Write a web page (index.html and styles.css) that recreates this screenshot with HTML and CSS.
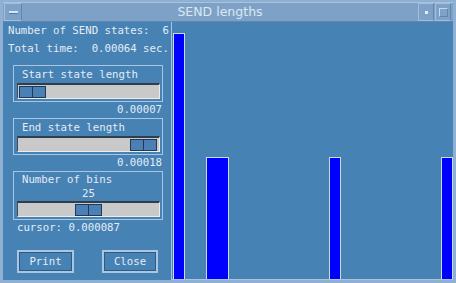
FILE: index.html
```html
<!DOCTYPE html>
<html lang="en">
<head>
  <meta charset="UTF-8" />
  <title>SEND lengths</title>
  <link rel="stylesheet" href="styles.css">
</head>
<body>
  <div class="window">
    <div class="titlebar">
      <div class="tb-btn menu-btn"><span class="dash"></span></div>
      <div class="title">SEND lengths</div>
      <div class="tb-btn min-btn"><span class="dot"></span></div>
      <div class="tb-btn max-btn"><span class="sq"></span></div>
    </div>
    <div class="content">
      <div class="panel">
        <div class="line">Number of SEND states:  6</div>
        <div class="line">Total time:  0.00064 sec.</div>

        <div class="group">
          <div class="label">Start state length</div>
          <div class="track start"><div class="thumb"></div></div>
        </div>
        <div class="value">0.00007</div>

        <div class="group">
          <div class="label">End state length</div>
          <div class="track end"><div class="thumb"></div></div>
        </div>
        <div class="value">0.00018</div>

        <div class="group bins">
          <div class="label">Number of bins</div>
          <div class="label center">25</div>
          <div class="track middle"><div class="thumb"></div></div>
        </div>
        <div class="cursor">cursor: 0.000087</div>

        <div class="buttons">
          <button class="btn">Print</button>
          <button class="btn">Close</button>
        </div>
      </div>
      <div class="canvas" id="canvas"></div>
    </div>
  </div>

  <script>
    // histogram bars: left offset, width, top (pixels inside the drawing area)
    const bars = [
      { left: 1, width: 12, top: 11 },
      { left: 34, width: 23, top: 135 },
      { left: 157, width: 12, top: 135 },
      { left: 269, width: 12, top: 135 }
    ];
    const canvas = document.getElementById("canvas");
    bars.forEach(b => {
      const bar = document.createElement("div");
      bar.className = "bar";
      bar.style.left = b.left + "px";
      bar.style.width = b.width + "px";
      bar.style.top = b.top + "px";
      canvas.appendChild(bar);
    });
  </script>
</body>
</html>
```

FILE: styles.css
```css
body {
  margin: 0;
  background: #4682b4;
}

.window {
  width: 456px;
  height: 283px;
  box-sizing: border-box;
  border: 3px solid #8fb0d2;
  border-top-width: 2px;
  background: #4682b4;
  display: flex;
  flex-direction: column;
  overflow: hidden;
  font-family: "DejaVu Sans Mono", "Liberation Mono", monospace;
  font-size: 10.7px;
  color: #e4ecf4;
}

.titlebar {
  height: 20px;
  flex: none;
  box-sizing: border-box;
  display: flex;
  background: #7ea2c7;
  border-top: 1px solid #a9c3de;
  border-bottom: 1px solid #5f87b0;
}

.tb-btn {
  box-sizing: border-box;
  height: 18px;
  border: 1px solid #a4bfdb;
  border-right-color: #5f87b0;
  display: flex;
  align-items: center;
  justify-content: center;
}

.menu-btn {
  width: 18px;
  margin-left: 1px;
}

.dash {
  width: 9px;
  height: 2px;
  background: #dbe6f2;
  border-bottom: 1px solid #52789f;
}

.title {
  flex: 1;
  text-align: center;
  font-family: "DejaVu Sans", sans-serif;
  font-size: 12.5px;
  line-height: 18px;
  color: #dce7f2;
}

.min-btn {
  width: 16px;
}

.dot {
  width: 3px;
  height: 3px;
  background: #e4ecf4;
}

.max-btn {
  width: 16px;
  margin-left: 1px;
  margin-right: 2px;
}

.sq {
  width: 9px;
  height: 9px;
  box-sizing: border-box;
  border: 1px solid #c8d8ea;
  border-right-color: #5f87b0;
  border-bottom-color: #5f87b0;
}

.content {
  flex: 1;
  min-height: 0;
  display: flex;
}

.panel {
  width: 168px;
  flex: none;
  padding-left: 5px;
  box-sizing: border-box;
}

.line,
.label,
.value,
.cursor {
  white-space: pre;
}

.line {
  line-height: 18px;
}

.group {
  margin-top: 7px;
  margin-left: 5px;
  width: 150px;
  box-sizing: border-box;
  border: 1px solid #a9c5e2;
  padding: 1px 2px 2px 3px;
}

.value + .group {
  margin-top: 0;
}

.label {
  line-height: 16px;
  padding-left: 5px;
}

.bins .label {
  line-height: 14px;
}

.label.center {
  text-align: center;
  padding-left: 0;
}

.track {
  height: 16px;
  box-sizing: border-box;
  background: #c9c9c9;
  border: 1px solid #ececec;
  border-top: 2px solid #2e3e4e;
  border-left-color: #3e4e5e;
  display: flex;
  align-items: center;
  padding: 0 2px 0 1px;
}

.track.end {
  justify-content: flex-end;
}

.track.middle {
  justify-content: center;
}

.thumb {
  width: 27px;
  height: 12px;
  box-sizing: border-box;
  border: 1px solid #1f3a56;
  background: linear-gradient(to right, #4a80b6 0 12px, #1f3a56 12px 13px, #4a80b6 13px);
}

.value {
  line-height: 16px;
  text-align: right;
  width: 154px;
}

.cursor {
  line-height: 16px;
  padding-left: 9px;
}

.buttons {
  display: flex;
  gap: 28px;
  margin-top: 14px;
  padding-left: 9px;
}

.btn {
  height: 23px;
  width: 57px;
  padding: 0;
  background: #4682b4;
  border: 2px solid #aac6e3;
  box-shadow: inset 1px 1px 0 #2d5b86, inset -1px -1px 0 #2d5b86;
  font-family: "DejaVu Sans Mono", "Liberation Mono", monospace;
  font-size: 10.7px;
  color: #e4ecf4;
}

.btn + .btn {
  width: 56px;
}

.canvas {
  flex: 1;
  position: relative;
  border-left: 1px solid #a9c5e2;
  border-bottom: 1px solid #a9c5e2;
}

.bar {
  position: absolute;
  bottom: 0;
  box-sizing: border-box;
  background: #0000ff;
  border: 1px solid #c8dcf0;
  border-bottom: none;
}
```
